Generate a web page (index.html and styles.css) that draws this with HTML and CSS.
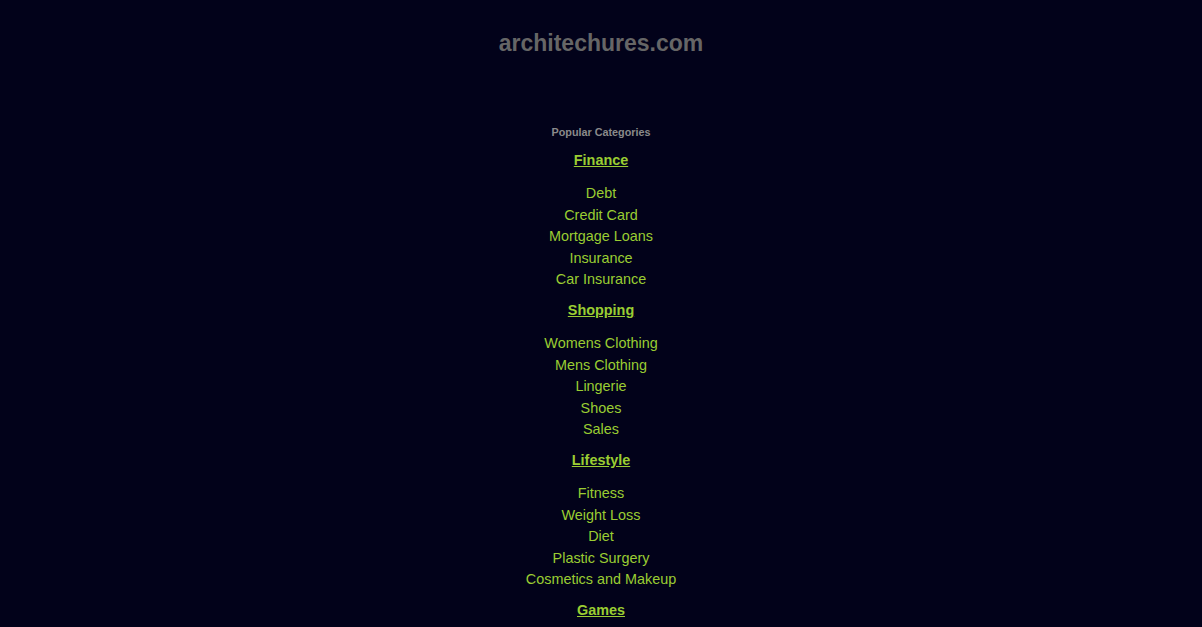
FILE: index.html
```html
<!DOCTYPE html>
<html>
<head>
<meta charset="utf-8">
<link rel="stylesheet" href="styles.css">
</head>
<body>
<div class="page">
  <h1 class="title">architechures.com</h1>
  <div class="cats">
    <div class="popular">Popular Categories</div>
    <div class="section">
      <a class="cat" href="#">Finance</a>
      <ul class="items">
        <li><a href="#">Debt</a></li>
        <li><a href="#">Credit Card</a></li>
        <li><a href="#">Mortgage Loans</a></li>
        <li><a href="#">Insurance</a></li>
        <li><a href="#">Car Insurance</a></li>
      </ul>
    </div>
    <div class="section">
      <a class="cat" href="#">Shopping</a>
      <ul class="items">
        <li><a href="#">Womens Clothing</a></li>
        <li><a href="#">Mens Clothing</a></li>
        <li><a href="#">Lingerie</a></li>
        <li><a href="#">Shoes</a></li>
        <li><a href="#">Sales</a></li>
      </ul>
    </div>
    <div class="section">
      <a class="cat" href="#">Lifestyle</a>
      <ul class="items">
        <li><a href="#">Fitness</a></li>
        <li><a href="#">Weight Loss</a></li>
        <li><a href="#">Diet</a></li>
        <li><a href="#">Plastic Surgery</a></li>
        <li><a href="#">Cosmetics and Makeup</a></li>
      </ul>
    </div>
    <div class="section">
      <a class="cat" href="#">Games</a>
      <ul class="items">
        <li><a href="#">Online Games</a></li>
        <li><a href="#">Video Games</a></li>
        <li><a href="#">Board Games</a></li>
        <li><a href="#">Puzzles</a></li>
        <li><a href="#">Toys</a></li>
      </ul>
    </div>
  </div>
</div>
</body>
</html>
```
FILE: styles.css
```css
html, body {
  margin: 0;
  padding: 0;
  background: #02021a;
}
body {
  font-family: "Liberation Sans", Arial, sans-serif;
  text-align: center;
}
.page {
  display: flex;
  flex-direction: column;
  align-items: center;
}
.title {
  margin: 28px 0 0;
  font-size: 23px;
  line-height: 30px;
  font-weight: bold;
  color: #666666;
}
.cats {
  margin-top: 66px;
  display: flex;
  flex-direction: column;
  align-items: center;
}
.popular {
  font-size: 10.8px;
  line-height: 16px;
  font-weight: bold;
  color: #8a8a8a;
  margin-bottom: 10px;
}
.section {
  display: flex;
  flex-direction: column;
  align-items: center;
}
.cat {
  display: block;
  font-size: 14.4px;
  line-height: 20px;
  font-weight: bold;
  color: #9acd32;
  text-decoration: underline;
}
.items {
  list-style: none;
  margin: 13px 0 9.5px;
  padding: 0;
}
.items li {
  font-size: 14.4px;
  line-height: 21.5px;
}
.items a {
  color: #9acd32;
  text-decoration: none;
}
```
